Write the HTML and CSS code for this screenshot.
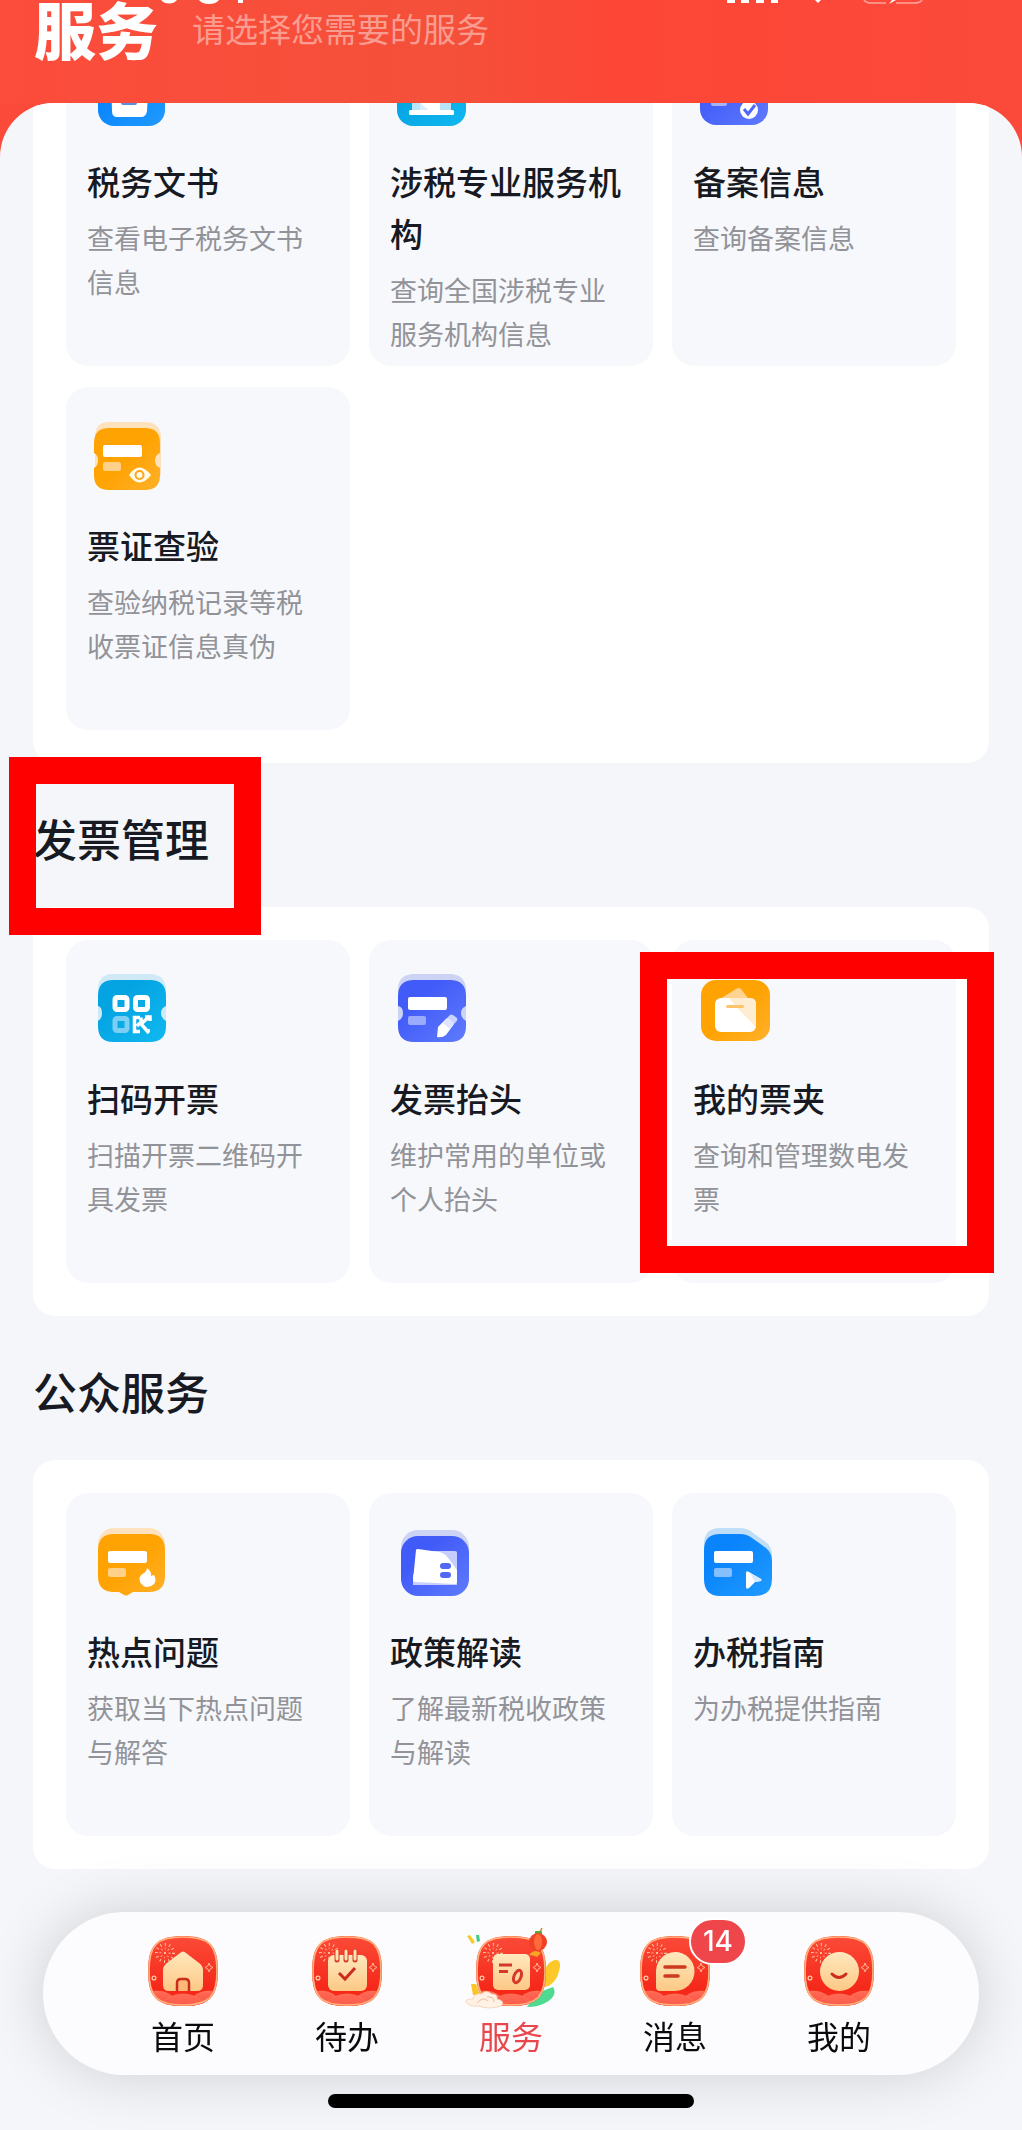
FILE: index.html
```html
<!DOCTYPE html>
<html lang="zh-CN">
<head>
<meta charset="utf-8">
<meta name="viewport" content="width=device-width, initial-scale=1">
<title>服务</title>
<link rel="stylesheet" href="styles.css">
</head>
<body>
<svg class="defs" aria-hidden="true">
  <defs>
    <linearGradient id="orange" x1="0" y1="0" x2="1" y2="1"><stop offset="0.5" stop-color="#ffa303"/><stop offset="1" stop-color="#ffb02a"/></linearGradient>
    <linearGradient id="indigo" x1="0" y1="0" x2="1" y2="1"><stop offset="0.3" stop-color="#415bf8"/><stop offset="1" stop-color="#5f7bfd"/></linearGradient>
    <linearGradient id="blue" x1="0" y1="0" x2="1" y2="1"><stop offset="0.3" stop-color="#0a84fc"/><stop offset="1" stop-color="#1f9bff"/></linearGradient>
    <linearGradient id="cyan" x1="0" y1="0" x2="1" y2="1"><stop offset="0.3" stop-color="#04a4e2"/><stop offset="1" stop-color="#10b8f0"/></linearGradient>
    <linearGradient id="red" x1="0" y1="0" x2="0" y2="1"><stop offset="0" stop-color="#fb4b38"/><stop offset="0.75" stop-color="#f5281a"/><stop offset="1" stop-color="#f5281a"/></linearGradient>
    <linearGradient id="cream" x1="0" y1="0" x2="0" y2="1"><stop offset="0" stop-color="#ffe8bd"/><stop offset="1" stop-color="#fdc886"/></linearGradient>
    <linearGradient id="hill" x1="0" y1="0" x2="0" y2="1"><stop offset="0" stop-color="#ff6a55"/><stop offset="1" stop-color="#f8433a"/></linearGradient>
    <clipPath id="tabclip"><path d="M36 1C62 1 71 10 71 36S62 71 36 71 1 62 1 36 10 1 36 1Z"/></clipPath>
    <symbol id="festive" viewBox="0 0 72 72">
      <path d="M36 1C62 1 71 10 71 36S62 71 36 71 1 62 1 36 10 1 36 1Z" fill="url(#red)"/>
      <g clip-path="url(#tabclip)" stroke="#fd8060" stroke-width="0.6">
        <ellipse cx="10" cy="68" rx="18" ry="12" fill="url(#hill)"/>
        <ellipse cx="62" cy="68" rx="18" ry="12" fill="url(#hill)"/>
        <ellipse cx="36" cy="74" rx="22" ry="15" fill="url(#hill)"/>
      </g>
      <path d="M36 2C62 2 70 10 70 36S62 70 36 70 2 62 2 36 10 2 36 2Z" fill="none" stroke="#ffb27c" stroke-width="1.6"/>
      <circle cx="18" cy="18" r="8.5" fill="none" stroke="#ffc9a0" stroke-width="3" stroke-dasharray="1 3.4"/>
      <circle cx="18" cy="18" r="4.5" fill="none" stroke="#ffb890" stroke-width="2" stroke-dasharray="0.8 2.6"/>
      <circle cx="18" cy="18" r="1" fill="#ffe0c0"/>
      <circle cx="7" cy="43" r="1.9" fill="none" stroke="#ffc9a0" stroke-width="1.3"/>
      <path d="M62 28Q62.500 32 66 32.500Q62.500 33 62 37Q61.500 33 58 32.500Q61.500 32 62 28Z" fill="none" stroke="#ffb890"/>
    </symbol>
  </defs>
</svg>

<header class="header">
  <svg class="status" viewBox="0 0 1022 5" preserveAspectRatio="none" aria-hidden="true">
    <g fill="#fff"><path d="M161 0H177Q174 3.500 169 3.500T161 0Z"/><path d="M199 0H219Q216 4 209 4T199 0Z"/><path d="M238 0H243V3H238Z"/><path d="M727 0H735V3H727ZM741 0H749V3H741ZM756 0H764V3H756ZM771 0H778V3H771ZM815 0H821L818 3Z"/></g>
    <path d="M864 0Q866 3 872 3H886M896 3H914Q920 3 922 0" fill="none" stroke="#fff" stroke-opacity=".5" stroke-width="1.500"/>
    <path d="M892 0H896L889 4Z" fill="#fff"/>
  </svg>
  <h1 class="header-title">服务</h1>
  <p class="header-sub">请选择您需要的服务</p>
</header>

<main class="sheet">
  <section class="panel panel-scrolled">
    <a class="tile" href="#">
      <svg class="icon" viewBox="0 0 88 88" aria-hidden="true"><rect x="11" y="13" width="67" height="60" rx="16" fill="#c3dffc"/><rect x="11" y="19" width="67" height="62" rx="16" fill="url(#blue)"/><path d="M24 32H62L60 66Q59 72 54 72H30Q25 72 25 66Z" fill="#fff"/><rect x="34" y="52" width="16" height="8" rx="2" fill="#5a8de0"/></svg>
      <h3 class="tile-title">税务文书</h3>
      <p class="tile-desc">查看电子税务文书信息</p>
    </a>
    <a class="tile" href="#">
      <svg class="icon" viewBox="0 0 88 88" aria-hidden="true"><rect x="7" y="13" width="69" height="60" rx="16" fill="#bfe6f7"/><rect x="7" y="19" width="69" height="62" rx="16" fill="url(#cyan)"/><path d="M22 34H61V66H22Z" fill="#b9e4f8"/><path d="M31 34H50V66H31Z" fill="#fff"/><path d="M30 58L40 66H30Z" fill="#d8eefa"/><rect x="19" y="65" width="45" height="5" rx="1.500" fill="#fff"/></svg>
      <h3 class="tile-title">涉税专业服务机构</h3>
      <p class="tile-desc">查询全国涉税专业服务机构信息</p>
    </a>
    <a class="tile" href="#">
      <svg class="icon" viewBox="0 0 88 88" aria-hidden="true"><rect x="7" y="13" width="68" height="60" rx="16" fill="#cdd3f8"/><rect x="7" y="19" width="68" height="61" rx="16" fill="url(#indigo)"/><rect x="18" y="34" width="40" height="12" rx="2" fill="#fff"/><rect x="18" y="53" width="16" height="8" rx="2" fill="#a9b3fb"/><circle cx="56" cy="65" r="9" fill="#fff"/><path d="M51 64L55 69L62 60" fill="none" stroke="#5068f8" stroke-width="3"/></svg>
      <h3 class="tile-title">备案信息</h3>
      <p class="tile-desc">查询备案信息</p>
    </a>
    <a class="tile" href="#">
      <svg class="icon" viewBox="0 0 88 88" aria-hidden="true"><path d="M22 13H58Q72 13 74 26V66H8V26Q9 13 22 13Z" fill="#fde2bd"/><path d="M22 19H58Q73 19 73 34V44Q68 46 68 51.500T73 59V66Q73 81 58 81H22Q7 81 7 66V59Q11 57 11 51.500T7 44V34Q7 19 22 19Z" fill="url(#orange)"/><rect x="16" y="36" width="39" height="12" rx="2" fill="#fff"/><rect x="16" y="53" width="18" height="9" rx="2.500" fill="#ffd089"/><path d="M42 66Q52 51 64 66Q52 81 42 66Z" fill="#fffbe8"/><circle cx="52.500" cy="66" r="4" fill="none" stroke="#ffa51c" stroke-width="2"/></svg>
      <h3 class="tile-title">票证查验</h3>
      <p class="tile-desc">查验纳税记录等税收票证信息真伪</p>
    </a>
  </section>

  <h2 class="section-title">发票管理<span class="marker marker-title"></span></h2>
  <section class="panel">
    <a class="tile" href="#">
      <svg class="icon" viewBox="0 0 88 88" aria-hidden="true"><path d="M26 12H63Q77 12 79 26V66H11V26Q12 12 26 12Z" fill="#cfe9f6"/><path d="M26 18H63Q79 18 79 34V44Q74 46 74 51T79 59V64Q79 80 63 80H26Q11 80 11 64V59Q15 57 15 51T11 44V34Q11 18 26 18Z" fill="url(#cyan)"/><g fill="none" stroke="#fff" stroke-width="5"><rect x="28" y="35.500" width="12" height="12" rx="2"/><rect x="48.500" y="35.500" width="12" height="12" rx="2"/><rect x="28" y="56.500" width="12" height="12" rx="2" stroke="#7bcff3"/></g><g stroke="#fff" stroke-width="3.500" fill="none"><path d="M53 55.500H47.500V69.500H53M54 55.500V60L50 64M63 54L54 62L62 71M58 55H63V59M61 67V71"/></g></svg>
      <h3 class="tile-title">扫码开票</h3>
      <p class="tile-desc">扫描开票二维码开具发票</p>
    </a>
    <a class="tile" href="#">
      <svg class="icon" viewBox="0 0 88 88" aria-hidden="true"><path d="M24 12H60Q74 12 76 26V66H8V26Q9 12 24 12Z" fill="#cdd3f5"/><path d="M24 18H60Q76 18 76 34V44Q71 46 71 51T76 59V64Q76 80 60 80H24Q8 80 8 64V59Q13 57 13 51T8 44V34Q8 18 24 18Z" fill="url(#indigo)"/><rect x="18" y="35" width="39" height="13" rx="2" fill="#fff"/><rect x="18" y="54" width="18" height="9" rx="2" fill="#9aaafc"/><path d="M48 65L57 56L64 62L56 73Q52 76 47 75Z" fill="#fff"/><path d="M57 56L60 53Q61 52 63 53L67 56Q68 58 66 60L64 62Z" fill="#c9d2fe"/><path d="M53 61L58 56L64 61L60 67Z" fill="#e0e5ff"/></svg>
      <h3 class="tile-title">发票抬头</h3>
      <p class="tile-desc">维护常用的单位或个人抬头</p>
    </a>
    <a class="tile" href="#">
      <svg class="icon" viewBox="0 0 88 88" aria-hidden="true"><rect x="8" y="18" width="69" height="61" rx="15" fill="url(#orange)"/><path d="M22 40L43 27Q46 25 48 27L58 40Z" fill="#ffd390"/><rect x="22" y="36" width="41" height="34" rx="6" fill="#fff"/><path d="M36 36H57Q63 36 63 42V65L46 48Z" fill="#ffedd2"/><rect x="33" y="43" width="18" height="3" rx="1.500" fill="#ffc46a"/></svg>
      <h3 class="tile-title">我的票夹</h3>
      <p class="tile-desc">查询和管理数电发票</p>
      <span class="marker marker-tile"></span>
    </a>
  </section>

  <h2 class="section-title">公众服务</h2>
  <section class="panel">
    <a class="tile" href="#">
      <svg class="icon" viewBox="0 0 88 88" aria-hidden="true"><rect x="11" y="13" width="67" height="50" rx="16" fill="#fde2bd"/><path d="M27 19H62Q78 19 78 35V61Q78 77 62 77H46L41 80Q39 81 37 80L32 77H27Q11 77 11 61V35Q11 19 27 19Z" fill="url(#orange)"/><rect x="21" y="36" width="39" height="12" rx="2" fill="#fff"/><rect x="21" y="53" width="18" height="9" rx="2.500" fill="#ffd089"/><path d="M60 53Q65 57 64 61L67 60Q70 65 67 69Q64 72 60 72T53 67Q51 61 57 58Q60 56 60 53Z" fill="#fff"/></svg>
      <h3 class="tile-title">热点问题</h3>
      <p class="tile-desc">获取当下热点问题与解答</p>
    </a>
    <a class="tile" href="#">
      <svg class="icon" viewBox="0 0 88 88" aria-hidden="true"><rect x="11" y="15" width="68" height="60" rx="17" fill="#cdd3f5"/><rect x="11" y="21" width="68" height="60" rx="17" fill="url(#indigo)"/><path d="M42 36H65Q67 36 67 38V70H23V60Z" fill="#c6cffc"/><path d="M28 34L49 37Q55 38 59 44L67 55V67Q67 69 65 69L25 67Q23 67 23 65L26 35Q26 34 28 34Z" fill="#fff"/><rect x="50" y="48" width="11" height="6" rx="3" fill="#5068f4"/><rect x="50" y="57" width="11" height="6" rx="3" fill="#5068f4"/></svg>
      <h3 class="tile-title">政策解读</h3>
      <p class="tile-desc">了解最新税收政策与解读</p>
    </a>
    <a class="tile" href="#">
      <svg class="icon" viewBox="0 0 88 88" aria-hidden="true"><path d="M27 13H47Q54 13 59 17L74 28Q79 32 79 41V64H11V29Q11 13 27 13Z" fill="#c0def8"/><path d="M27 19H47Q54 19 59 23L73 33Q79 38 79 46V64Q79 81 62 81H27Q11 81 11 64V35Q11 19 27 19Z" fill="url(#blue)"/><rect x="21" y="36" width="39" height="12" rx="2" fill="#fff"/><rect x="21" y="53" width="18" height="9" rx="2" fill="#85c0fd"/><path d="M53 58Q53 55 56 57L68 64Q69 65 68 66L62 67L56 73Q53 75 53 72Z" fill="#fff"/><path d="M57 58L68 64Q69 65 68 66L62 67Z" fill="#d5e8ff"/></svg>
      <h3 class="tile-title">办税指南</h3>
      <p class="tile-desc">为办税提供指南</p>
    </a>
  </section>
</main>

<footer class="dock">
  <nav class="tabs">
    <a class="tab" href="#">
      <svg class="tab-icon" viewBox="0 0 72 72" aria-hidden="true"><use href="#festive"/><path d="M33 18Q36 15 39 18L52 28Q56 31 56 35V50Q56 56 50 56H22Q16 56 16 50V35Q16 31 20 28Z" fill="url(#cream)"/><path d="M30 56V48Q30 44 34 44H38Q42 44 42 48V56" fill="#fdb877" stroke="#cc2c1c" stroke-width="2.500"/></svg>
      <span class="tab-label">首页</span>
    </a>
    <a class="tab" href="#">
      <svg class="tab-icon" viewBox="0 0 72 72" aria-hidden="true"><use href="#festive"/><rect x="17" y="20" width="39" height="36" rx="6" fill="url(#cream)"/><path d="M26 17V25M35 17V25M44 17V25" stroke="#d43a24" stroke-width="5" stroke-linecap="round"/><path d="M26 16V24M35 16V24M44 16V24" stroke="#ffe3b4" stroke-width="3" stroke-linecap="round"/><path d="M28 38L34 44L44 33" fill="none" stroke="#cc2c1c" stroke-width="3"/></svg>
      <span class="tab-label">待办</span>
    </a>
    <a class="tab tab-active" href="#" aria-current="page">
      <svg class="tab-icon" viewBox="0 0 72 72" aria-hidden="true"><path d="M68 48Q68 28 80 25Q89 24 82 42Q77 51 70 52Z" fill="#fcc928"/><path d="M52 72Q60 57 78 52Q83 60 72 67Q64 72 52 72Z" fill="#4edb91"/><use href="#festive"/><path d="M-8 1L-5 0L0 7L-3 9Z" fill="#f7cb2e"/><path d="M1 0L4 0L5 6L2 7Z" fill="#3ecb82"/><path d="M-4 49L1 49L5 60L-2 60Z" fill="#f9c52a"/><path d="M-9 67Q-10 64 -2 64Q-1 58 6 59Q11 54 17 59Q23 59 22 64Q31 66 26 71Q14 75 4 71Q-6 72 -9 67Z" fill="#fff1e4" stroke="#f3cfb0" stroke-width="0.800"/><path d="M2 68Q8 61 13 66M12 62Q19 61 19 67" fill="none" stroke="#f0bd9c"/><rect x="18" y="19" width="37" height="36" rx="5" fill="url(#cream)"/><path d="M24 30H37M24 36.500H33" stroke="#d4382a" stroke-width="3" /><ellipse cx="42.500" cy="41.500" rx="3.500" ry="6.500" transform="rotate(22 42.500 41.500)" fill="none" stroke="#d4382a" stroke-width="3"/><path d="M63 1L67 -7" stroke="#c08a28" stroke-width="1.500"/><rect x="60" y="-4" width="7" height="4" rx="1" fill="#59a83e"/><circle cx="63" cy="7" r="9" fill="#f04124"/><ellipse cx="63" cy="7" rx="4" ry="8" fill="#ff6a3b"/><path d="M56 18Q60 14 66 18L62 22Q58 20 54 20Z" fill="#f6a623"/></svg>
      <span class="tab-label">服务</span>
    </a>
    <a class="tab" href="#">
      <svg class="tab-icon" viewBox="0 0 72 72" aria-hidden="true"><use href="#festive"/><path d="M36 17A19.500 19.500 0 1 1 36 56H21Q17 56 17 52V36A19.500 19.500 0 0 1 36 17Z" fill="url(#cream)"/><path d="M26 32H46M26 41H39" stroke="#cc3a20" stroke-width="3.500" stroke-linecap="round"/></svg>
      <span class="badge">14</span>
      <span class="tab-label">消息</span>
    </a>
    <a class="tab" href="#">
      <svg class="tab-icon" viewBox="0 0 72 72" aria-hidden="true"><use href="#festive"/><circle cx="36.500" cy="36.500" r="19.500" fill="url(#cream)"/><path d="M29 39Q36 46 43 39" fill="none" stroke="#cc2c1c" stroke-width="3" stroke-linecap="round"/></svg>
      <span class="tab-label">我的</span>
    </a>
  </nav>
  <div class="home-indicator"></div>
</footer>
</body>
</html>
```

FILE: styles.css
```css
* {
  box-sizing: border-box;
}

body {
  margin: 0;
  background: #fb4a3a;
  color: #171a22;
  font-family: "Noto Sans CJK SC", "Noto Sans", sans-serif;
}

h1, h2, h3, p {
  margin: 0;
}

a {
  color: inherit;
  text-decoration: none;
}

.defs {
  position: absolute;
  width: 0;
  height: 0;
}

/* Header */
.header {
  position: relative;
  display: flex;
  align-items: center;
  gap: 34px;
  height: 103px;
  padding: 0 34px 48px;
  background: linear-gradient(90deg, #fc4c3b, #f4503a 44%, #fd4636 60%, #fb4a3a);
}

.status {
  position: absolute;
  top: 0;
  left: 0;
  width: 100%;
  height: 5px;
}

.header-title {
  color: #fff;
  font-size: 62px;
  font-weight: 900;
  line-height: 56px;
}

.header-sub {
  color: rgba(255, 255, 255, 0.45);
  font-size: 33px;
  font-weight: 400;
  line-height: 56px;
}

/* Scrolling sheet */
.sheet {
  min-height: calc(100vh - 103px);
  padding: 0 33px 261px;
  overflow: hidden;
  border-radius: 54px 54px 0 0;
  background: #f4f6fa;
}

.section-title {
  position: relative;
  margin: 43px 0 37px;
  font-size: 44px;
  font-weight: 500;
  line-height: 64px;
}

.panel {
  display: grid;
  grid-template-columns: repeat(3, 1fr);
  gap: 21px 19px;
  padding: 33px;
  border-radius: 22px;
  background: #fff;
}

/* First panel is scrolled partly under the header */
.panel-scrolled {
  margin-top: -113px;
}

.tile {
  position: relative;
  min-height: 343px;
  padding: 22px 21px 8px;
  border-radius: 22px;
  background: #f7f8fc;
}

.icon {
  display: block;
  width: 88px;
  height: 88px;
  margin-bottom: 22px;
}

.tile-title {
  margin-bottom: 9px;
  font-size: 33px;
  font-weight: 500;
  line-height: 52px;
}

.tile-desc {
  color: #929398;
  font-size: 27px;
  font-weight: 400;
  line-height: 44px;
}

/* Highlight frames */
.marker {
  position: absolute;
  z-index: 1;
  border: 27px solid #f00;
  pointer-events: none;
}

.marker-title {
  top: -49px;
  left: -24px;
  width: 252px;
  height: 178px;
}

.marker-tile {
  top: 12px;
  right: -38px;
  bottom: 10px;
  left: -32px;
}

/* Bottom tab bar */
.dock {
  position: fixed;
  right: 0;
  bottom: 0;
  left: 0;
  z-index: 2;
  display: flex;
  flex-direction: column;
  align-items: center;
  gap: 19px;
  padding: 0 43px 22px;
}

.tabs {
  display: grid;
  grid-template-columns: repeat(5, 1fr);
  width: 100%;
  padding: 23px 58px 18px;
  border-radius: 82px;
  background: #fcfcfe;
  box-shadow: 0 0 60px rgba(0, 0, 0, 0.16);
}

.tab {
  position: relative;
  display: flex;
  flex-direction: column;
  align-items: center;
  gap: 6px;
  color: #0a0a0c;
}

.tab-active {
  color: #e9474b;
}

.tab-icon {
  width: 72px;
  height: 72px;
  overflow: visible;
}

.tab-label {
  font-size: 32px;
  font-weight: 400;
  line-height: 44px;
}

.badge {
  position: absolute;
  top: -17px;
  left: calc(50% + 14px);
  width: 58px;
  height: 47px;
  border: 2px solid #fff;
  border-radius: 24px;
  background: #ee464b;
  color: #fff;
  font-family: Inter, sans-serif;
  font-size: 28px;
  font-weight: 500;
  line-height: 43px;
  text-align: center;
}

.home-indicator {
  width: 366px;
  max-width: 60%;
  height: 14px;
  border-radius: 7px;
  background: #000;
}
```
